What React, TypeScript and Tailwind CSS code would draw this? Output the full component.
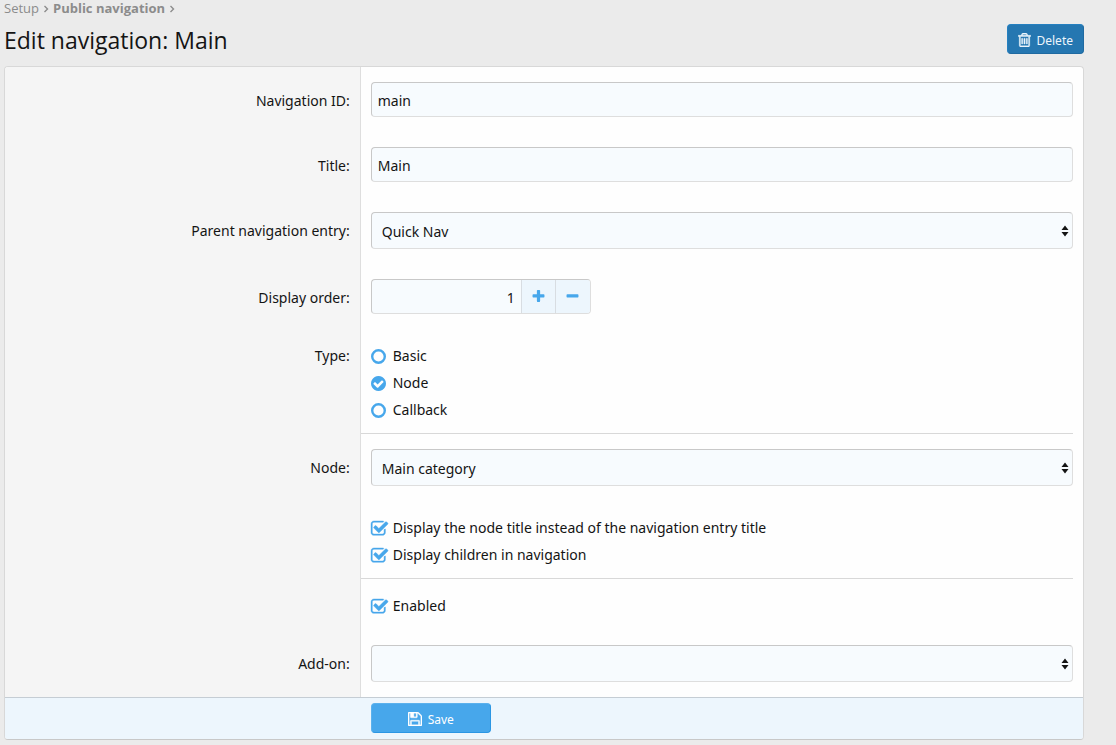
import React, { useState, type ReactNode } from "react";

const paths = {
  trash:
    "M704 736v576q0 14-9 23t-23 9h-64q-14 0-23-9t-9-23v-576q0-14 9-23t23-9h64q14 0 23 9t9 23zm256 0v576q0 14-9 23t-23 9h-64q-14 0-23-9t-9-23v-576q0-14 9-23t23-9h64q14 0 23 9t9 23zm256 0v576q0 14-9 23t-23 9h-64q-14 0-23-9t-9-23v-576q0-14 9-23t23-9h64q14 0 23 9t9 23zm128 724v-948h-896v948q0 22 7 40.5t14.5 27 10.5 8.5h832q3 0 10.5-8.5t14.5-27 7-40.5zm-672-1076h448l-48-117q-7-9-17-11h-317q-10 2-17 11zm928 32v64q0 14-9 23t-23 9h-96v948q0 83-47 143.5t-113 60.5h-832q-66 0-113-58.5t-47-141.5v-952h-96q-14 0-23-9t-9-23v-64q0-14 9-23t23-9h309l70-167q15-37 54-63t79-26h320q40 0 79 26t54 63l70 167h309q14 0 23 9t9 23z",
  save: "M512 1536h768v-384h-768v384zm896 0h128v-896q0-14-10-38.5t-20-34.5l-281-281q-10-10-34-20t-39-10v416q0 40-28 68t-68 28h-576q-40 0-68-28t-28-68v-416h-128v1280h128v-416q0-40 28-68t68-28h832q40 0 68 28t28 68v416zm-384-928v-320q0-13-9.5-22.5t-22.5-9.5h-192q-13 0-22.5 9.5t-9.5 22.5v320q0 13 9.5 22.5t22.5 9.5h192q13 0 22.5-9.5t9.5-22.5zm640 32v928q0 40-28 68t-68 28h-1344q-40 0-68-28t-28-68v-1344q0-40 28-68t68-28h928q40 0 88 20t76 48l280 280q28 28 48 76t20 88z",
  plus: "M1600 736v192q0 40-28 68t-68 28h-416v416q0 40-28 68t-68 28h-192q-40 0-68-28t-28-68v-416h-416q-40 0-68-28t-28-68v-192q0-40 28-68t68-28h416v-416q0-40 28-68t68-28h192q40 0 68 28t28 68v416h416q40 0 68 28t28 68z",
  minus:
    "M1600 736v192q0 40-28 68t-68 28h-1216q-40 0-68-28t-28-68v-192q0-40 28-68t68-28h1216q40 0 68 28t28 68z",
  circleCheck:
    "M1412 734q0-28-18-46l-91-90q-19-19-45-19t-45 19l-408 407-226-226q-19-19-45-19t-45 19l-91 90q-18 18-18 46 0 27 18 45l362 362q19 19 45 19 27 0 46-19l543-543q18-18 18-45zm252 162q0 209-103 385.5t-279.5 279.5-385.5 103-385.5-103-279.5-279.5-103-385.5 103-385.5 279.5-279.5 385.5-103 385.5 103 279.5 279.5 103 385.5z",
  squareCheck:
    "M1408 930v318q0 119-84.5 203.5t-203.5 84.5h-832q-119 0-203.5-84.5t-84.5-203.5v-832q0-119 84.5-203.5t203.5-84.5h832q63 0 117 25 15 7 18 23 3 17-9 29l-49 49q-10 10-23 10-3 0-9-2-23-6-45-6h-832q-66 0-113 47t-47 113v832q0 66 47 113t113 47h832q66 0 113-47t47-113v-254q0-13 9-22l64-64q10-10 23-10 6 0 12 3 20 8 20 29zm231-489l-814 814q-24 24-57 24t-57-24l-430-430q-24-24-24-57t24-57l110-110q24-24 57-24t57 24l263 263 647-647q24-24 57-24t57 24l110 110q24 24 24 57t-24 57z",
};

function Icon({
  d,
  className,
  viewBox = "128 128 1536 1536",
  weight = 0,
}: {
  d: string;
  className: string;
  viewBox?: string;
  weight?: number;
}) {
  return (
    <svg viewBox={viewBox} fill="currentColor" stroke="currentColor" strokeWidth={weight} aria-hidden="true" className={className}>
      <path d={d} />
    </svg>
  );
}

const fieldBox =
  "w-full rounded border border-[#dedede] border-t-[#c8c8c8] border-l-[#c8c8c8] bg-[#f7fbfe] text-[#141414] outline-none focus:border-[#47a7eb]";

function Row({
  label,
  htmlFor,
  choices = false,
  divider = false,
  children,
}: {
  label?: string;
  htmlFor?: string;
  choices?: boolean;
  divider?: boolean;
  children: ReactNode;
}) {
  return (
    <div className="flex">
      <div className={`w-[33%] shrink-0 border-r border-[#dedede] bg-[#f5f5f5] pr-2.5 text-right leading-6 ${choices ? "pt-[15px]" : "pt-[22px]"}`}>
        {label && htmlFor && <label htmlFor={htmlFor}>{label}</label>}
        {label && !htmlFor && <span id="type-label">{label}</span>}
      </div>
      <div
        className={`mr-2.5 min-w-0 flex-1 pt-[15px] pl-2.5 ${choices ? "border-b pb-[11px]" : "pb-[15px]"} ${divider ? "border-[#d8d8d8]" : "border-transparent"}`}
      >
        {children}
      </div>
    </div>
  );
}

function TextRow({ label, id, value }: { label: string; id: string; value: string }) {
  return (
    <Row label={label} htmlFor={id}>
      <input id={id} type="text" defaultValue={value} className={`${fieldBox} block h-[35px] px-1.5 pt-0.5`} />
    </Row>
  );
}

function SelectRow({ label, id, options }: { label: string; id: string; options: string[] }) {
  return (
    <Row label={label} htmlFor={id}>
      <div className="relative">
        <select id={id} className={`${fieldBox} block h-[37px] appearance-none pt-0.5 pr-6 pl-2.5`}>
          {options.map((o) => (
            <option key={o}>{o}</option>
          ))}
        </select>
        <svg viewBox="0 0 8 12" fill="#141414" aria-hidden="true" className="pointer-events-none absolute top-[13px] right-1 h-3 w-2">
          <path d="M4 .5 7.5 5h-7zM.5 7h7L4 11.5z" />
        </svg>
      </div>
    </Row>
  );
}

function Radio({ label, checked, onSelect }: { label: string; checked: boolean; onSelect: () => void }) {
  return (
    <label className="flex h-6 items-center gap-[7px]">
      <span className="relative h-[15px] w-[15px] shrink-0 text-[#47a7eb]">
        <input
          type="radio"
          name="type"
          checked={checked}
          onChange={onSelect}
          className="block h-[15px] w-[15px] appearance-none rounded-full"
        />
        {checked ? (
          <Icon d={paths.circleCheck} className="pointer-events-none absolute inset-0 h-[15px] w-[15px]" />
        ) : (
          <svg viewBox="0 0 15 15" fill="none" stroke="currentColor" strokeWidth="2.4" aria-hidden="true" className="pointer-events-none absolute inset-0 h-[15px] w-[15px]">
            <circle cx="7.5" cy="7.5" r="6.3" />
          </svg>
        )}
      </span>
      <span className="pb-0.5">{label}</span>
    </label>
  );
}

function Check({ label }: { label: string }) {
  return (
    <label className="flex h-6 items-center gap-[5px]">
      <span className="relative h-[17px] w-[17px] shrink-0 text-[#47a7eb]">
        <input
          type="checkbox"
          defaultChecked
          className="peer block h-[15px] w-[15px] appearance-none rounded border border-[#47a7eb] checked:border-0"
        />
        <Icon
          d={paths.squareCheck}
          viewBox="0 32 1664 1664"
          weight={40}
          className="pointer-events-none absolute inset-0 hidden h-[17px] w-[17px] overflow-visible peer-checked:block"
        />
      </span>
      <span className="pb-0.5">{label}</span>
    </label>
  );
}

export default function App() {
  const [type, setType] = useState("Node");
  const [order, setOrder] = useState(1);

  return (
    <main className="min-h-screen bg-[#ebebeb] pr-8 pb-[5px] pl-1 font-['Noto_Sans','Open_Sans',sans-serif] text-[14px] text-[#141414]">
      <nav aria-label="Breadcrumb" className="flex h-4 items-center gap-1 font-['Open_Sans','Noto_Sans',sans-serif] text-[13px] leading-4 text-[#8c8c8c]">
        <a href="#setup">Setup</a>
        <Chevron />
        <a href="#public-navigation" className="font-bold">
          Public navigation
        </a>
        <Chevron />
      </nav>

      <header className="flex h-[50px] items-center justify-between pb-1">
        <h1 className="pt-0.5 font-['Open_Sans','Noto_Sans',sans-serif] text-[23px] leading-8">Edit navigation: Main</h1>
        <button
          type="button"
          className="flex h-[30px] items-center gap-1.5 rounded border border-[#2580c0] border-r-[#1f6aa1] border-b-[#1f6aa1] bg-[#2577b1] px-2.5 text-[12px] text-[#edf6fd]"
        >
          <Icon d={paths.trash} viewBox="192 128 1408 1536" weight={40} className="mt-0.5 h-[14px] w-[13px]" />
          <span className="pt-1">Delete</span>
        </button>
      </header>

      <form onSubmit={(e) => e.preventDefault()} className="overflow-hidden rounded border border-[#d8d8d8] border-b-[#c8c8c8] bg-[#fefefe]">
        <TextRow label="Navigation ID:" id="navigation-id" value="main" />
        <TextRow label="Title:" id="title" value="Main" />
        <SelectRow label="Parent navigation entry:" id="parent" options={["Quick Nav"]} />
        <Row label="Display order:" htmlFor="order">
          <div className="flex h-[35px] w-[220px] overflow-hidden rounded border border-[#dedede] border-t-[#c8c8c8] border-l-[#c8c8c8] bg-[#f7fbfe]">
            <input
              id="order"
              type="text"
              inputMode="numeric"
              value={order}
              onChange={(e) => setOrder(Number(e.target.value) || 0)}
              className="min-w-0 flex-1 bg-transparent pt-0.5 pr-1.5 text-right outline-none"
            />
            <button
              type="button"
              aria-label="Increase"
              onClick={() => setOrder(order + 1)}
              className="flex w-[34px] items-center justify-center border-l border-[#d8dde2] bg-[#edf6fd] text-[#47a7eb]"
            >
              <Icon d={paths.plus} viewBox="192 128 1408 1536" className="h-[13px] w-[13px]" />
            </button>
            <button
              type="button"
              aria-label="Decrease"
              onClick={() => setOrder(order - 1)}
              className="flex w-[35px] items-center justify-center border-l border-[#d8dde2] bg-[#edf6fd] text-[#47a7eb]"
            >
              <Icon d={paths.minus} viewBox="192 128 1408 1536" className="h-[13px] w-[13px]" />
            </button>
          </div>
        </Row>
        <Row label="Type:" choices divider>
          <div role="radiogroup" aria-labelledby="type-label" className="flex flex-col gap-[3px]">
            {["Basic", "Node", "Callback"].map((t) => (
              <Radio key={t} label={t} checked={type === t} onSelect={() => setType(t)} />
            ))}
          </div>
        </Row>
        <SelectRow label="Node:" id="node" options={["Main category"]} />
        <Row choices divider>
          <div className="flex flex-col gap-[3px]">
            <Check label="Display the node title instead of the navigation entry title" />
            <Check label="Display children in navigation" />
          </div>
        </Row>
        <Row choices>
          <Check label="Enabled" />
        </Row>
        <SelectRow label="Add-on:" id="addon" options={[""]} />
        <div className="flex border-t border-[#c5cdd4] bg-[#edf6fd] pt-[5px] pb-1.5">
          <div className="w-[33%] shrink-0" />
          <div className="pl-2.5">
            <button
              type="submit"
              className="flex h-[30px] w-[120px] items-center justify-center gap-1.5 rounded border border-[#5bb1ed] border-r-[#2b96e3] border-b-[#2b96e3] bg-[#47a7eb] text-[12px] text-white"
            >
              <Icon d={paths.save} weight={40} className="mt-0.5 h-[14px] w-[14px]" />
              <span className="pt-1">Save</span>
            </button>
          </div>
        </div>
      </form>
    </main>
  );
}

function Chevron() {
  return (
    <svg viewBox="0 0 6 8" fill="none" stroke="currentColor" strokeWidth="1.4" aria-hidden="true" className="mt-0.5 h-2 w-1.5">
      <path d="M1.5 1 4.5 4l-3 3" />
    </svg>
  );
}
